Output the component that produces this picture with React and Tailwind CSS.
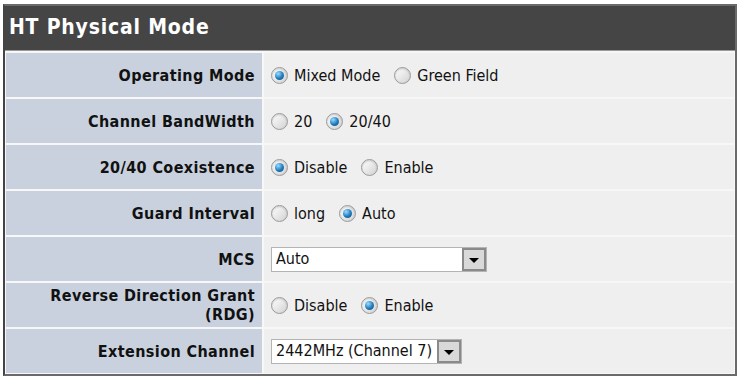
import React from 'react';

const font = { fontFamily: '"DejaVu Sans Condensed", "DejaVu Sans", Tahoma, sans-serif' };

const Radio = ({ checked, label }) => (
    <label className="flex items-center gap-[6px] mr-[14px]">
        <span className="w-[17px] h-[17px] rounded-full border border-[#9a9a9a] bg-gradient-to-br from-white to-[#d2d2d2] flex items-center justify-center shadow-[inset_0_1px_2px_rgba(0,0,0,0.18)]">
            {checked && (
                <span className="w-[9px] h-[9px] rounded-full bg-[radial-gradient(circle_at_35%_30%,#9adcff,#1f7bbd_55%,#0b4674)]" />
            )}
        </span>
        <span className="text-[16px] text-[#111] leading-none mt-[1px]">{label}</span>
    </label>
);

const Select = ({ value, width }) => (
    <div className="flex items-stretch h-[25px] border border-[#b4b4b4] bg-white" style={{ width }}>
        <div className="flex-1 flex items-center px-[4px] text-[16px] text-[#111] whitespace-nowrap overflow-hidden">{value}</div>
        <div className="w-[24px] border-2 border-[#8a8a8a] bg-[#d9d9d9] flex items-center justify-center">
            <span className="w-0 h-0 border-l-[5px] border-r-[5px] border-t-[5px] border-l-transparent border-r-transparent border-t-black mt-[3px]" />
        </div>
    </div>
);

const rows = [
    { label: 'Operating Mode', radios: [['Mixed Mode', true], ['Green Field', false]] },
    { label: 'Channel BandWidth', radios: [['20', false], ['20/40', true]] },
    { label: '20/40 Coexistence', radios: [['Disable', true], ['Enable', false]] },
    { label: 'Guard Interval', radios: [['long', false], ['Auto', true]] },
    { label: 'MCS', select: { value: 'Auto', width: 216 } },
    { label: <>Reverse Direction Grant<br />(RDG)</>, radios: [['Disable', false], ['Enable', true]] },
    { label: 'Extension Channel', select: { value: '2442MHz (Channel 7)', width: 191 } },
];

export default function App() {
    return (
        <div className="w-[742px] h-[380px] bg-white pt-[4px] pl-[3px]" style={font}>
            <div className="w-[734px] border-2 border-[#6a6a6a] border-l-[#444] bg-[#f7f7f7]">
                {/* Title */}
                <div className="h-[45px] bg-[#454545] flex items-center px-[4px] border-b border-[#9a9a9a]">
                    <h1 className="text-white font-bold text-[21px] tracking-[0.8px]">HT Physical Mode</h1>
                </div>

                {/* Rows */}
                <div className="grid grid-cols-[256px_1fr] gap-[2px] p-[1px] pt-[2px]">
                    {rows.map((row, i) => (
                        <React.Fragment key={i}>
                            <div className="h-[44px] bg-[#c9d1de] flex items-center justify-end pr-[7px] text-right font-bold text-[16px] tracking-[0.4px] leading-[19px] text-[#111]">
                                <span>{row.label}</span>
                            </div>
                            <div className="h-[44px] bg-[#efefef] flex items-center pl-[7px]">
                                {row.radios && row.radios.map(([l, c]) => <Radio key={l} label={l} checked={c} />)}
                                {row.select && <Select value={row.select.value} width={row.select.width} />}
                            </div>
                        </React.Fragment>
                    ))}
                </div>
            </div>
        </div>
    );
}
